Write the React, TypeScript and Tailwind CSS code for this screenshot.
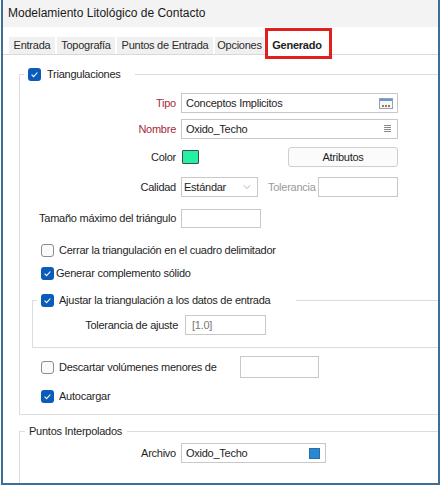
import React from 'react';
import { ChevronDown } from 'lucide-react';

const Box = ({ checked }: { checked?: boolean }) =>
  checked ? (
    <span className="w-[13px] h-[13px] rounded-[3px] bg-[#0b5cb8] flex items-center justify-center shrink-0">
      <svg width="9" height="9" viewBox="0 0 9 9">
        <path d="M1.6 4.7 3.6 6.6 7.4 2.5" fill="none" stroke="#fff" strokeWidth="1.1" />
      </svg>
    </span>
  ) : (
    <span className="w-[13px] h-[13px] rounded-[3px] border border-[#8c8c8c] bg-[#fafafa] shrink-0" />
  );

const Row = ({ label, red, className = '', children }: { label: string; red?: boolean; className?: string; children: React.ReactNode }) => (
  <div className={`flex items-center ${className}`}>
    <span className={`w-[156px] mr-[5px] text-right ${red ? 'text-[#a8283a]' : ''}`}>{label}</span>
    {children}
  </div>
);

const tabs = [
  { name: 'Entrada', w: 'w-[46px]' },
  { name: 'Topografía', w: 'w-[58px]' },
  { name: 'Puntos de Entrada', w: 'w-[96px]' },
  { name: 'Opciones', w: 'w-[49px]' },
];

export default function App() {
  return (
    <div className="w-[442px] h-[487px] bg-white overflow-hidden font-['Liberation_Sans',Arial,sans-serif] text-[11px] tracking-[-0.25px] text-[#1e1e1e]">
      <div className="ml-[1px] w-[439px] h-[485px] border-x-2 border-b-2 border-[#3d6f96] flex flex-col overflow-hidden">
        <div className="h-[27px] shrink-0 bg-[#f3f3f3] flex items-center pl-[5px] pb-[1px] text-[12px] tracking-normal text-[#1a1a1a]">
          Modelamiento Litológico de Contacto
        </div>

        <div className="mt-[10px] pl-[6px] flex items-end gap-[2px] border-b border-[#d9d9d9]">
          {tabs.map(t => (
            <div key={t.name} className={`${t.w} h-[17px] bg-[#f0f0f0] text-center leading-[17px] text-[#2a2a2a]`}>
              {t.name}
            </div>
          ))}
          <div className="relative w-[62px] h-[18px] -mb-[1px] bg-white text-center leading-[17px] font-bold">
            Generado
            <span className="absolute left-[-1px] top-[-9px] w-[67px] h-[31px] border-[3px] border-[#e0201c]" />
          </div>
        </div>

        <fieldset className="ml-[16px] mt-[12px] w-[430px] border border-[#dcdcdc] pb-[8px]">
          <legend className="ml-[4px] pl-[4px] pr-[14px] h-[14px] flex items-center gap-[6px]">
            <Box checked />
            <span>Triangulaciones</span>
          </legend>

          <Row label="Tipo" red className="mt-[12px]">
            <div className="w-[217px] h-[20px] border border-[#c8c8c8] flex items-center justify-between pl-[4px] pr-[4px]">
              <span>Conceptos Implicitos</span>
              <svg width="14" height="11" viewBox="0 0 14 11">
                <rect x="0.5" y="0.5" width="13" height="10" fill="#f4f7fb" stroke="#8ea3bd" />
                <rect x="1" y="1" width="12" height="2" fill="#6f97c8" />
                <rect x="3" y="7" width="2" height="2" fill="#b07a2c" />
                <rect x="6" y="7" width="2" height="2" fill="#b07a2c" />
                <rect x="9" y="7" width="2" height="2" fill="#b07a2c" />
              </svg>
            </div>
          </Row>

          <Row label="Nombre" red className="mt-[6px]">
            <div className="w-[217px] h-[20px] border border-[#c8c8c8] flex items-center justify-between pl-[4px] pr-[6px]">
              <span>Oxido_Techo</span>
              <svg width="7" height="8" viewBox="0 0 7 8">
                <path d="M0 0.5h7M0 2.5h7M0 4.5h7M0 6.5h7" stroke="#8a8a8a" strokeWidth="1" />
              </svg>
            </div>
          </Row>

          <Row label="Color" className="mt-[8px]">
            <div className="flex items-center w-[217px]">
              <span className="w-[17px] h-[14px] ml-[1px] bg-[#22f2a2] border border-[#4a4a4a] rounded-[1px]" />
              <button className="ml-auto w-[110px] h-[20px] border border-[#cfcfcf] rounded-[3px] bg-[#fbfbfb]">Atributos</button>
            </div>
          </Row>

          <Row label="Calidad" className="mt-[10px]">
            <div className="w-[77px] h-[20px] border border-[#c8c8c8] flex items-center justify-between pl-[2px] pr-[4px]">
              <span>Estándar</span>
              <ChevronDown size={12} strokeWidth={1.3} color="#8a8a8a" />
            </div>
            <span className="ml-[10px] w-[50px] text-[#9a9a9a]">Tolerancia</span>
            <div className="w-[80px] h-[20px] border border-[#c8c8c8]" />
          </Row>

          <Row label="Tamaño máximo del triángulo" className="mt-[12px]">
            <div className="w-[80px] h-[19px] border border-[#c8c8c8]" />
          </Row>

          <div className="mt-[12px] ml-[21px] h-[20px] flex items-center gap-[5px]">
            <Box />
            <span>Cerrar la triangulación en el cuadro delimitador</span>
          </div>
          <div className="mt-[3px] ml-[21px] h-[20px] flex items-center gap-[2px]">
            <Box checked />
            <span>Generar complemento sólido</span>
          </div>

          <fieldset className="ml-[12px] mt-[10px] w-[420px] border border-[#dcdcdc] pb-[12px]">
            <legend className="ml-[4px] pl-[4px] pr-[26px] h-[14px] flex items-center gap-[5px]">
              <Box checked />
              <span>Ajustar la triangulación a los datos de entrada</span>
            </legend>
            <div className="mt-[8px] flex items-center">
              <span className="w-[145px] mr-[7px] text-right">Tolerancia de ajuste</span>
              <div className="w-[81px] h-[20px] border border-[#c8c8c8] flex items-center pl-[6px] text-[#777]">
                [1.0]
              </div>
            </div>
          </fieldset>

          <div className="mt-[8px] ml-[21px] h-[22px] flex items-center">
            <Box />
            <span className="ml-[5px] w-[181px]">Descartar volúmenes menores de</span>
            <div className="w-[79px] h-[22px] border border-[#c8c8c8]" />
          </div>
          <div className="mt-[8px] ml-[21px] h-[20px] flex items-center gap-[5px]">
            <Box checked />
            <span>Autocargar</span>
          </div>
        </fieldset>

        <fieldset className="ml-[16px] mt-[9px] w-[430px] h-[90px] border border-[#dcdcdc] shrink-0">
          <legend className="ml-[5px] pl-[4px] pr-[5px] h-[14px] flex items-center">Puntos Interpolados</legend>
          <Row label="Archivo" className="mt-[5px]">
            <div className="w-[145px] h-[20px] border border-[#c8c8c8] flex items-center justify-between pl-[4px] pr-[5px]">
              <span>Oxido_Techo</span>
              <span className="w-[11px] h-[11px] bg-[#2b88d0] border border-[#2070b0]" />
            </div>
          </Row>
        </fieldset>
      </div>
    </div>
  );
}
